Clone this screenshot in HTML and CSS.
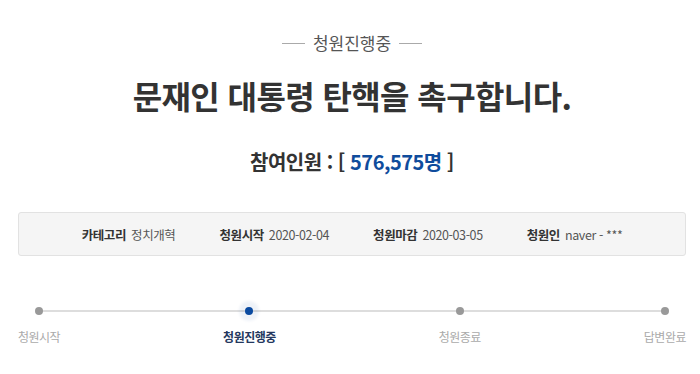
FILE: index.html
```html
<!DOCTYPE html>
<html lang="ko">
<head>
    <meta charset="UTF-8">
    <meta name="viewport" content="width=device-width, initial-scale=1.0">
    <title>청원진행중</title>
    <link rel="stylesheet" href="styles.css">
</head>
<body>

    <!-- Petition header -->
    <div class="petition">
        <div class="status">
            <span class="status-line"></span>
            <span>청원진행중</span>
            <span class="status-line"></span>
        </div>
        <h1 class="title">문재인 대통령 탄핵을 촉구합니다.</h1>
        <h2 class="count">참여인원 : [ <span class="count-num">576,575명</span> ]</h2>

        <!-- Petition info -->
        <ul class="info">
            <li><strong>카테고리</strong>정치개혁</li>
            <li><strong>청원시작</strong>2020-02-04</li>
            <li><strong>청원마감</strong>2020-03-05</li>
            <li><strong>청원인</strong>naver - ***</li>
        </ul>

        <!-- Progress steps -->
        <ol class="steps">
            <li class="step"><span class="dot"></span>청원시작</li>
            <li class="step active"><span class="dot"></span>청원진행중</li>
            <li class="step"><span class="dot"></span>청원종료</li>
            <li class="step"><span class="dot"></span>답변완료</li>
        </ol>
    </div>

</body>
</html>
```

FILE: styles.css
```css
* {
    margin: 0;
    padding: 0;
    box-sizing: border-box;
}
body {
    font-family: "Noto Sans CJK KR", "Noto Sans", sans-serif;
    background: #fff;
    color: #333;
}
.petition {
    padding: 33px 14px 0 18px;
}
/* Status label */
.status {
    display: flex;
    justify-content: center;
    align-items: center;
    gap: 8px;
    font-size: 17px;
    line-height: 20px;
    color: #555;
}
.status-line {
    width: 23px;
    height: 1px;
    background: #aaa;
}
.title {
    margin-top: 22px;
    text-align: center;
    font-size: 32px;
    line-height: 40px;
    font-weight: bold;
    color: #333;
    letter-spacing: -0.6px;
}
.count {
    margin-top: 33px;
    text-align: center;
    font-size: 20px;
    line-height: 28px;
    font-weight: bold;
    color: #333;
    letter-spacing: -0.5px;
}
.count-num {
    color: #0f4c9c;
}
/* Info box */
.info {
    list-style: none;
    margin-top: 36px;
    height: 44px;
    display: flex;
    justify-content: center;
    align-items: center;
    gap: 44px;
    background: #f5f5f5;
    border: 1px solid #e2e2e2;
    border-radius: 3px;
    font-size: 12.5px;
    color: #555;
    letter-spacing: -0.4px;
}
.info strong {
    color: #333;
    margin-right: 5px;
}
/* Steps */
.steps {
    list-style: none;
    position: relative;
    margin-top: 51px;
    display: flex;
    justify-content: space-between;
}
.steps::before {
    content: "";
    position: absolute;
    top: 3px;
    left: 22px;
    right: 22px;
    height: 2px;
    background: #ddd;
}
.step {
    position: relative;
    display: flex;
    flex-direction: column;
    align-items: center;
    font-size: 12px;
    line-height: 16px;
    color: #aaa;
    letter-spacing: -0.5px;
}
.dot {
    width: 8px;
    height: 8px;
    border-radius: 50%;
    background: #999;
    margin-bottom: 14px;
}
.step.active {
    color: #24385e;
    font-weight: bold;
}
.step.active .dot {
    background: #0a4aa0;
    box-shadow: 0 0 3px 6px rgba(10, 74, 160, 0.07);
}
```
